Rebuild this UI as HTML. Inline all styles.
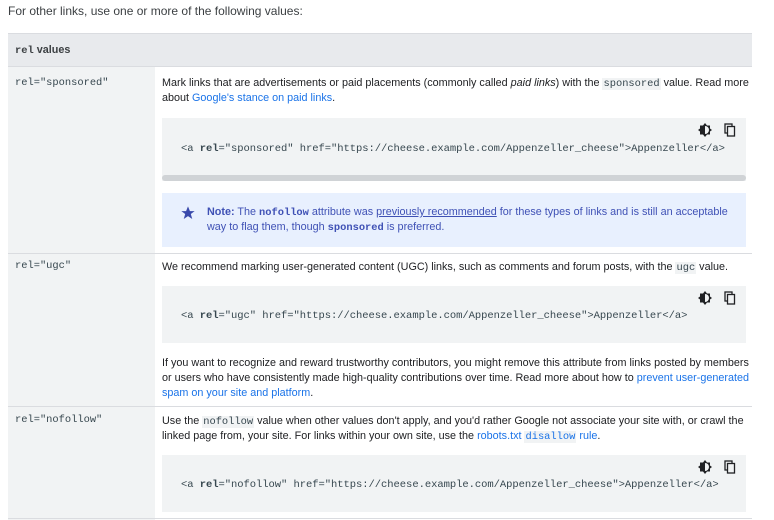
<!DOCTYPE html>
<html><head><style>
*{margin:0;padding:0;box-sizing:border-box}
body{width:774px;height:520px;overflow:hidden;background:#fff;font-family:"Liberation Sans",sans-serif;font-size:10.8px;color:#202124;position:relative}
.a{position:absolute}
.line{position:absolute;white-space:nowrap;line-height:15px}
code,.m{font-family:"Liberation Mono",monospace;font-size:10.4px}
.ic{background:#f1f3f4;color:#37474f;padding:0 1px}
a{color:#1a73e8;text-decoration:none}
.code{position:absolute;left:162px;width:584px;background:#f1f3f4}
.ct{position:absolute;left:19px;white-space:nowrap;font-family:"Liberation Mono",monospace;font-size:10.5px;color:#37474f;letter-spacing:-0.05px}
.ct b{font-weight:bold;color:#37474f}
.icons{position:absolute;right:8px;top:5px}
</style></head><body>
<div class="line" style="left:8px;top:4px;font-size:12px;color:#3c4043">For other links, use one or more of the following values:</div>

<div class="a" style="left:8px;top:33px;width:744px;height:34px;background:#e8eaed;border-top:1px solid #dadce0;border-bottom:1px solid #dadce0"></div>
<div class="line" style="left:15px;top:43px;font-weight:bold;color:#3c4043"><code style="font-weight:bold">rel</code> values</div>

<div class="a" style="left:8px;top:67px;width:147px;height:453px;background:#f1f3f4"></div>
<div class="a" style="left:8px;top:253px;width:744px;height:1px;background:#dadce0"></div>
<div class="a" style="left:8px;top:406px;width:744px;height:1px;background:#dadce0"></div>
<div class="a" style="left:8px;top:518px;width:744px;height:1px;background:#dadce0"></div>

<div class="line m" style="left:15px;top:76px;color:#37474f">rel="sponsored"</div>
<div class="line m" style="left:15px;top:259px;color:#37474f">rel="ugc"</div>
<div class="line m" style="left:15px;top:413px;color:#37474f">rel="nofollow"</div>

<div class="line" style="left:162px;top:76px">Mark links that are advertisements or paid placements (commonly called <i>paid links</i>) with the <code class="ic">sponsored</code> value. Read more</div>
<div class="line" style="left:162px;top:91px">about <a>Google's stance on paid links</a>.</div>

<div class="code" style="top:118px;height:63px">
 <div class="icons"><svg width="40" height="14" viewBox="0 0 40 14"><path d="M7 0l2 2.5h3v3l2 1.5-2 1.5v3h-3L7 14l-2-2.5H2v-3L0 7l2-1.5v-3h3z" fill="#202124"/><path d="M7 3a4 4 0 0 1 0 8z" fill="#f1f3f4"/><rect x="27" y="1" width="7" height="9" fill="none" stroke="#202124" stroke-width="1.3"/><rect x="29.5" y="3.5" width="7" height="9.5" fill="#f1f3f4" stroke="#202124" stroke-width="1.3"/></svg></div>
 <div class="ct" style="top:25px">&lt;a <b>rel</b>="sponsored" href="https://cheese.example.com/Appenzeller_cheese"&gt;Appenzeller&lt;/a&gt;</div>
 <div class="a" style="left:0;right:0;top:57px;height:6px;background:#d0d3d6;border-radius:3px"></div>
</div>

<div class="a" style="left:162px;top:193px;width:584px;height:54px;background:#e8f0fe"></div>
<svg class="a" style="left:180px;top:205px" width="16" height="16" viewBox="0 0 24 24"><path d="M12 2l2.9 7.1H22l-5.8 4.4 2.2 7.5L12 16.6 5.6 21l2.2-7.5L2 9.1h7.1z" fill="#3949ab"/></svg>
<div class="line" style="left:207px;top:205px;color:#3f51b5"><b>Note:</b> The <code style="font-weight:bold">nofollow</code> attribute was <u>previously recommended</u> for these types of links and is still an acceptable</div>
<div class="line" style="left:207px;top:220px;color:#3f51b5">way to flag them, though <code style="font-weight:bold">sponsored</code> is preferred.</div>

<div class="line" style="left:162px;top:260px">We recommend marking user-generated content (UGC) links, such as comments and forum posts, with the <code class="ic">ugc</code> value.</div>
<div class="code" style="top:286px;height:57px">
 <div class="icons"><svg width="40" height="14" viewBox="0 0 40 14"><path d="M7 0l2 2.5h3v3l2 1.5-2 1.5v3h-3L7 14l-2-2.5H2v-3L0 7l2-1.5v-3h3z" fill="#202124"/><path d="M7 3a4 4 0 0 1 0 8z" fill="#f1f3f4"/><rect x="27" y="1" width="7" height="9" fill="none" stroke="#202124" stroke-width="1.3"/><rect x="29.5" y="3.5" width="7" height="9.5" fill="#f1f3f4" stroke="#202124" stroke-width="1.3"/></svg></div>
 <div class="ct" style="top:24px">&lt;a <b>rel</b>="ugc" href="https://cheese.example.com/Appenzeller_cheese"&gt;Appenzeller&lt;/a&gt;</div>
</div>
<div class="line" style="left:162px;top:356px">If you want to recognize and reward trustworthy contributors, you might remove this attribute from links posted by members</div>
<div class="line" style="left:162px;top:371px">or users who have consistently made high-quality contributions over time. Read more about how to <a>prevent user-generated</a></div>
<div class="line" style="left:162px;top:386px"><a>spam on your site and platform</a>.</div>

<div class="line" style="left:162px;top:414px">Use the <code class="ic">nofollow</code> value when other values don't apply, and you'd rather Google not associate your site with, or crawl the</div>
<div class="line" style="left:162px;top:429px">linked page from, your site. For links within your own site, use the <a>robots.txt <code class="ic" style="color:#1a73e8">disallow</code> rule</a>.</div>
<div class="code" style="top:455px;height:57px">
 <div class="icons"><svg width="40" height="14" viewBox="0 0 40 14"><path d="M7 0l2 2.5h3v3l2 1.5-2 1.5v3h-3L7 14l-2-2.5H2v-3L0 7l2-1.5v-3h3z" fill="#202124"/><path d="M7 3a4 4 0 0 1 0 8z" fill="#f1f3f4"/><rect x="27" y="1" width="7" height="9" fill="none" stroke="#202124" stroke-width="1.3"/><rect x="29.5" y="3.5" width="7" height="9.5" fill="#f1f3f4" stroke="#202124" stroke-width="1.3"/></svg></div>
 <div class="ct" style="top:24px">&lt;a <b>rel</b>="nofollow" href="https://cheese.example.com/Appenzeller_cheese"&gt;Appenzeller&lt;/a&gt;</div>
</div>
</body></html>
